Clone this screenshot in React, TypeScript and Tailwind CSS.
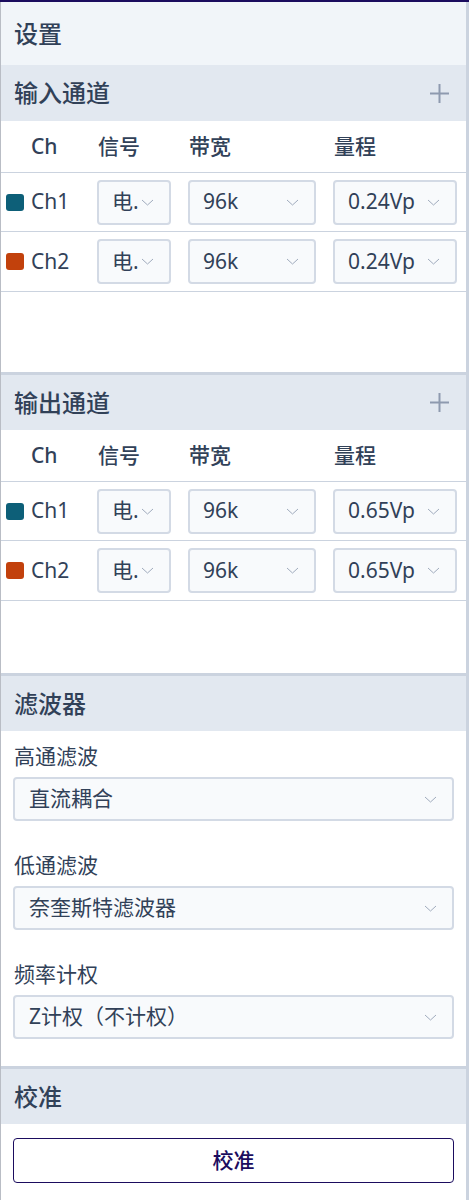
import React from "react";

type Channel = { name: string; color: string; signal: string; bandwidth: string; range: string };

const inputChannels: Channel[] = [
  { name: "Ch1", color: "bg-[#0d5f78]", signal: "电.", bandwidth: "96k", range: "0.24Vp" },
  { name: "Ch2", color: "bg-[#c2410c]", signal: "电.", bandwidth: "96k", range: "0.24Vp" },
];

const outputChannels: Channel[] = [
  { name: "Ch1", color: "bg-[#0d5f78]", signal: "电.", bandwidth: "96k", range: "0.65Vp" },
  { name: "Ch2", color: "bg-[#c2410c]", signal: "电.", bandwidth: "96k", range: "0.65Vp" },
];

const filters = [
  { label: "高通滤波", value: "直流耦合" },
  { label: "低通滤波", value: "奈奎斯特滤波器" },
  { label: "频率计权", value: "Z计权（不计权）" },
];

function Chevron() {
  return (
    <svg width="13" height="7" viewBox="0 0 13 7" fill="none" className="shrink-0">
      <polyline points="1,1 6.5,6 12,1" stroke="#a0abbd" strokeWidth="1" />
    </svg>
  );
}

function Plus() {
  return (
    <svg width="19" height="19" viewBox="0 0 19 19" fill="none">
      <path d="M9.5 0V19M0 9.5H19" stroke="#8e9aaf" strokeWidth="2" />
    </svg>
  );
}

function SmallSelect({ value }: { value: string }) {
  return (
    <div className="flex h-[45px] items-center justify-between rounded-[4px] border-2 border-[#d3dae5] bg-[#f8fafc] pl-[13px] pr-[15px] text-[21px] text-slate-700">
      <span className="whitespace-nowrap">{value}</span>
      <Chevron />
    </div>
  );
}

function SectionHeader({ title, plus, top }: { title: string; plus?: boolean; top?: boolean }) {
  return (
    <div
      className={`flex items-center justify-between bg-slate-200 pl-[13px] pr-[17px] ${
        top ? "h-[56px]" : "h-[58px] border-t-[3px] border-[#cbd3df]"
      }`}
    >
      <span className="text-[24px] font-medium text-slate-700">{title}</span>
      {plus && <Plus />}
    </div>
  );
}

function ChannelTable({ rows, spacer }: { rows: Channel[]; spacer: string }) {
  return (
    <div>
      <div className="grid h-[52px] grid-cols-[74px_74px_128px_124px] items-center gap-x-[17px] border-b border-[#cbd3df] pl-[5px] text-[21px] font-medium text-slate-700">
        <span className="pl-[25px]">Ch</span>
        <span className="pl-[1px]">信号</span>
        <span className="pl-[1px]">带宽</span>
        <span className="pl-[1px]">量程</span>
      </div>
      {rows.map((row, i) => (
        <div
          key={row.name}
          className={`grid grid-cols-[74px_74px_128px_124px] items-center gap-x-[17px] border-b border-[#cbd3df] pl-[5px] ${
            i === 0 ? "h-[59px]" : "h-[60px]"
          }`}
        >
          <div className="flex items-center gap-[7px]">
            <span className={`h-[17px] w-[18px] rounded-[3px] ${row.color}`} />
            <span className="text-[21px] text-slate-700">{row.name}</span>
          </div>
          <SmallSelect value={row.signal} />
          <SmallSelect value={row.bandwidth} />
          <SmallSelect value={row.range} />
        </div>
      ))}
      <div className={spacer} />
    </div>
  );
}

export default function App() {
  return (
    <div className="w-[469px] bg-white font-['Noto_Sans','Noto_Sans_CJK_SC',sans-serif]">
      <div className="h-[2px] bg-[#1b0c5e]" />
      <div className="border-l border-r-[3px] border-l-[#b9bdc5] border-r-[#cbd3df]">
        <div className="flex h-[63px] items-center bg-slate-100 pl-[13px]">
          <h1 className="text-[24px] font-medium text-slate-700">设置</h1>
        </div>

        <SectionHeader title="输入通道" plus top />
        <ChannelTable rows={inputChannels} spacer="h-[80px]" />

        <SectionHeader title="输出通道" plus />
        <ChannelTable rows={outputChannels} spacer="h-[72px]" />

        <SectionHeader title="滤波器" />
        <div className="px-[12px] pb-[27px] pt-[11px]">
          {filters.map((f, i) => (
            <div key={f.label} className={i === 0 ? "" : "mt-[30px]"}>
              <p className="flex h-[30px] items-center pl-[1px] text-[21px] text-slate-700">{f.label}</p>
              <div className="mt-[5px] flex h-[44px] items-center justify-between rounded-[4px] border-2 border-[#d3dae5] bg-[#f8fafc] pl-[14px] pr-[15px] text-[21px] text-slate-700">
                <span>{f.value}</span>
                <Chevron />
              </div>
            </div>
          ))}
        </div>

        <SectionHeader title="校准" />
        <div className="px-[12px] pb-[17px] pt-[14px]">
          <button className="flex h-[45px] w-full items-center justify-center rounded-[4px] border border-[#1b0c5e] bg-white text-[21px] font-medium text-[#1b0c5e]">
            校准
          </button>
        </div>
      </div>
    </div>
  );
}
